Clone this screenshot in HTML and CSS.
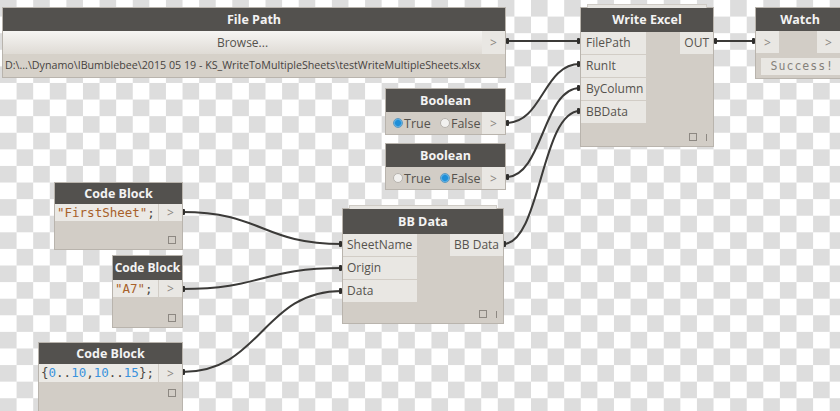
FILE: index.html
```html
<!DOCTYPE html>
<html lang="en">
<head>
    <meta charset="UTF-8">
    <title>Dynamo - Write Excel</title>
    <link rel="stylesheet" href="styles.css">
</head>
<body>
<div class="canvas">

    <!-- wires between the nodes -->
    <svg class="wires" width="840" height="411" viewBox="0 0 840 411">
        <g fill="none" stroke="#3b3a38" stroke-width="2">
            <path d="M506 41 L580 41"/>
            <path d="M506 123 C543 123 543 64 580 64"/>
            <path d="M506 177 C543 177 543 88 580 88"/>
            <path d="M503 244 C541 244 541 111 580 111"/>
            <path d="M714 41 L755 41"/>
            <path d="M182 212 C262 212 262 244 342 244"/>
            <path d="M182 289 C262 289 262 268 342 268"/>
            <path d="M182 372 C262 372 262 291 342 291"/>
        </g>
        <g fill="#2f2e2c">
            <rect x="506" y="38" width="3" height="6" rx="1"/>
            <rect x="577" y="38" width="3" height="6" rx="1"/>
            <rect x="506" y="120" width="3" height="6" rx="1"/>
            <rect x="577" y="61" width="3" height="6" rx="1"/>
            <rect x="506" y="174" width="3" height="6" rx="1"/>
            <rect x="577" y="85" width="3" height="6" rx="1"/>
            <rect x="503" y="241" width="3" height="6" rx="1"/>
            <rect x="577" y="108" width="3" height="6" rx="1"/>
            <rect x="714" y="38" width="3" height="6" rx="1"/>
            <rect x="752" y="38" width="3" height="6" rx="1"/>
            <rect x="182" y="209" width="3" height="6" rx="1"/>
            <rect x="339" y="241" width="3" height="6" rx="1"/>
            <rect x="182" y="286" width="3" height="6" rx="1"/>
            <rect x="339" y="265" width="3" height="6" rx="1"/>
            <rect x="182" y="369" width="3" height="6" rx="1"/>
            <rect x="339" y="288" width="3" height="6" rx="1"/>
        </g>
    </svg>

    <!-- File Path -->
    <div class="node file-path">
        <div class="node-title">File Path</div>
        <div class="browse-row">
            <div class="browse">Browse...</div>
            <div class="out-arrow">&gt;</div>
        </div>
        <div class="path-text">D:\...\Dynamo\IBumblebee\2015 05 19 - KS_WriteToMultipleSheets\testWriteMultipleSheets.xlsx</div>
    </div>

    <!-- Booleans -->
    <div class="node boolean bool-one">
        <div class="node-title">Boolean</div>
        <div class="bool-row">
            <label class="radio"><span class="dot on"></span>True</label>
            <label class="radio"><span class="dot"></span>False</label>
            <div class="out-arrow">&gt;</div>
        </div>
    </div>
    <div class="node boolean bool-two">
        <div class="node-title">Boolean</div>
        <div class="bool-row">
            <label class="radio"><span class="dot"></span>True</label>
            <label class="radio"><span class="dot on"></span>False</label>
            <div class="out-arrow">&gt;</div>
        </div>
    </div>

    <!-- Write Excel -->
    <div class="node stacked write-excel">
        <div class="node-title">Write Excel</div>
        <div class="ports">
            <div class="inputs">
                <div class="port">FilePath</div>
                <div class="port">RunIt</div>
                <div class="port">ByColumn</div>
                <div class="port">BBData</div>
            </div>
            <div class="outputs">
                <div class="port out">OUT</div>
            </div>
        </div>
        <div class="node-foot"><span class="box"></span><span class="bar"></span></div>
    </div>

    <!-- Watch -->
    <div class="node watch">
        <div class="node-title">Watch</div>
        <div class="watch-row">
            <div class="out-arrow">&gt;</div>
            <div class="out-arrow">&gt;</div>
        </div>
        <div class="watch-value">Success!</div>
    </div>

    <!-- Code Blocks -->
    <div class="node code code-one">
        <div class="node-title">Code Block</div>
        <div class="code-row">
            <div class="code-text"><span class="str">"FirstSheet"</span>;</div>
            <div class="out-arrow">&gt;</div>
        </div>
        <div class="node-foot"><span class="box"></span></div>
    </div>
    <div class="node code code-two">
        <div class="node-title">Code Block</div>
        <div class="code-row">
            <div class="code-text"><span class="str">"A7"</span>;</div>
            <div class="out-arrow">&gt;</div>
        </div>
        <div class="node-foot"><span class="box"></span></div>
    </div>
    <div class="node code code-three">
        <div class="node-title">Code Block</div>
        <div class="code-row">
            <div class="code-text">{<span class="num">0</span>..<span class="num">10</span>,<span class="num">10</span>..<span class="num">15</span>};</div>
            <div class="out-arrow">&gt;</div>
        </div>
        <div class="node-foot"><span class="box"></span></div>
    </div>

    <!-- BB Data -->
    <div class="node stacked bb-data">
        <div class="node-title">BB Data</div>
        <div class="ports">
            <div class="inputs">
                <div class="port">SheetName</div>
                <div class="port">Origin</div>
                <div class="port">Data</div>
            </div>
            <div class="outputs">
                <div class="port out">BB Data</div>
            </div>
        </div>
        <div class="node-foot"><span class="box"></span><span class="bar"></span></div>
    </div>

</div>
</body>
</html>
```

FILE: styles.css
```css
/* Page + checkered canvas */
body {
    margin: 0;
    font-family: "Open Sans", "DejaVu Sans", sans-serif;
}

.canvas {
    position: relative;
    width: 840px;
    height: 411px;
    overflow: hidden;
    background-color: #ffffff;
    background-image: conic-gradient(#ffffff 25%, #dddddd 0 50%, #ffffff 0 75%, #dddddd 0);
    background-size: 33.2px 33.2px;
}

.wires {
    position: absolute;
    left: 0;
    top: 0;
}

/* Generic node */
.node {
    position: absolute;
    box-sizing: border-box;
    display: flex;
    flex-direction: column;
    background: #d2cdc6;
    border: 1px solid #b9b4ad;
    color: #58554f;
    font-size: 12px;
}

.node-title {
    flex: none;
    height: 23px;
    line-height: 23px;
    background: #53514e;
    color: #f3f3f3;
    font-weight: bold;
    font-size: 12.5px;
    text-align: center;
    white-space: nowrap;
}

/* preview bubble edge above some nodes */
.stacked::before {
    content: "";
    position: absolute;
    left: 6px;
    right: 6px;
    top: -4px;
    height: 3px;
    background: #e6e4e0;
    border: 1px solid #cfcbc5;
    border-bottom: none;
}

.out-arrow {
    flex: none;
    width: 23px;
    display: flex;
    align-items: center;
    justify-content: center;
    background: #e9e7e3;
    color: #8a8680;
    font-size: 12px;
}

/* File Path node */
.file-path {
    left: 2px;
    top: 7px;
    width: 504px;
    height: 71px;
}

.browse-row {
    display: flex;
    height: 23px;
}

.browse {
    flex: 1;
    text-align: center;
    line-height: 23px;
    color: #55524d;
    background: linear-gradient(#f6f5f3, #dfdbd5);
}

.path-text {
    flex: 1;
    padding-left: 2px;
    line-height: 23px;
    font-size: 10.7px;
    color: #46433f;
    background: #d6d1c9;
    white-space: nowrap;
}

/* Boolean nodes */
.boolean {
    left: 385px;
    width: 121px;
    height: 47px;
}

.bool-one { top: 88px; }
.bool-two { top: 143px; }

.bool-row {
    flex: 1;
    display: flex;
    align-items: stretch;
}

.radio {
    display: flex;
    align-items: center;
    padding-left: 7px;
    width: 47px;
    font-size: 12.5px;
    color: #55524d;
}

.radio + .radio {
    width: 44px;
    padding-left: 2px;
}

.dot {
    width: 8px;
    height: 8px;
    margin-right: 1px;
    border-radius: 50%;
    background: #f2f1ef;
    border: 1px solid #b7b3ad;
}

.dot.on {
    background: radial-gradient(circle, #1f8fd8 45%, #7cc2ee 75%);
    border-color: #5d99c0;
}

.bool-row .out-arrow {
    margin-left: auto;
}

/* Nodes with input / output ports */
.ports {
    display: flex;
    justify-content: space-between;
}

.inputs,
.outputs {
    display: flex;
    flex-direction: column;
    gap: 1px;
}

.port {
    height: 22px;
    line-height: 22px;
    padding: 0 4px;
    background: #e9e7e3;
    color: #56534e;
    white-space: nowrap;
}

.write-excel {
    left: 580px;
    top: 7px;
    width: 134px;
    height: 140px;
}

.write-excel .node-title { height: 24px; line-height: 24px; }
.write-excel .inputs { width: 65px; }
.write-excel .inputs .port { padding-left: 5px; }

.bb-data {
    left: 342px;
    top: 208px;
    width: 162px;
    height: 116px;
}

.bb-data .node-title { height: 25px; line-height: 25px; }
.bb-data .inputs { width: 74px; }

.node-foot {
    margin-top: auto;
    height: 18px;
    display: flex;
    align-items: center;
    justify-content: flex-end;
    gap: 9px;
    padding-right: 6px;
}

.node-foot .box {
    width: 6px;
    height: 6px;
    border: 1px solid #8d8882;
}

.node-foot .bar {
    width: 1px;
    height: 7px;
    background: #8d8882;
}

/* Watch node */
.watch {
    left: 755px;
    top: 7px;
    width: 90px;
    height: 72px;
}

.watch-row {
    height: 22px;
    display: flex;
    justify-content: space-between;
}

.watch-row .out-arrow:last-child {
    margin-right: 4px;
}

.watch-value {
    margin: 5px 4px 0 5px;
    height: 17px;
    line-height: 17px;
    padding-right: 6px;
    text-align: right;
    background: #e9e7e3;
    color: #85817b;
    font-family: "DejaVu Sans Mono", monospace;
    font-size: 11.5px;
    letter-spacing: 1px;
}

/* Code Block nodes */
.code-row {
    display: flex;
    height: 17px;
}

.code-text {
    flex: 1;
    padding-left: 2px;
    line-height: 17px;
    background: #ebe9e5;
    color: #4a4844;
    font-family: "DejaVu Sans Mono", monospace;
    font-size: 12.5px;
    white-space: nowrap;
}

.code .out-arrow {
    border-left: 1px solid #d2cdc6;
}

.code .node-foot {
    padding-right: 6px;
}

.str { color: #a8612a; }
.num { color: #3a93dd; }

.code-one {
    left: 54px;
    top: 182px;
    width: 129px;
    height: 68px;
}

.code-one .node-title { height: 21px; line-height: 21px; }

.code-two {
    left: 112px;
    top: 255px;
    width: 71px;
    height: 73px;
}

.code-two .node-title { height: 24px; line-height: 24px; font-size: 12px; }

.code-three {
    left: 38px;
    top: 342px;
    width: 145px;
    height: 72px;
}

.code-three .node-title { height: 21px; line-height: 21px; }
.code-three .code-row { height: 18px; }
.code-three .node-foot { height: 22px; margin-top: 0; }
```
